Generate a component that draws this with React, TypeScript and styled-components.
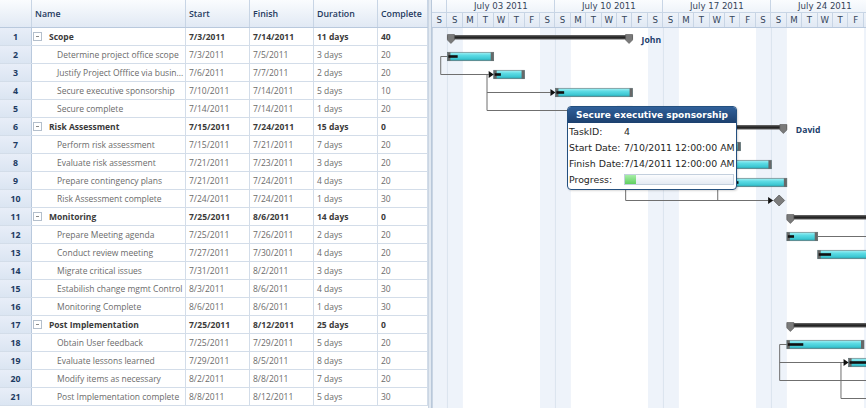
import React from "react";
import styled, { createGlobalStyle } from "styled-components";

// layout constants (px)
const ROW_H = 18;
const HEAD_H = 28;
const DAY_W = 108 / 7;
const GRID_W = 428;
const SPLIT_W = 4;
const DAYS = 29; // Sat Jul 2 .. Sat Jul 30
const HEADER_DAYS = 28; // the last one is off-screen
const COLS = "32px 154px 64px 64px 64px 50px";

type TaskRow = {
  name: string;
  start: string;
  finish: string;
  duration: string;
  complete: string;
  parent?: boolean;
};

const rows: TaskRow[] = [
  { name: "Scope", start: "7/3/2011", finish: "7/14/2011", duration: "11 days", complete: "40", parent: true },
  { name: "Determine project office scope", start: "7/3/2011", finish: "7/5/2011", duration: "3 days", complete: "20" },
  { name: "Justify Project Offfice via busin...", start: "7/6/2011", finish: "7/7/2011", duration: "2 days", complete: "20" },
  { name: "Secure executive sponsorship", start: "7/10/2011", finish: "7/14/2011", duration: "5 days", complete: "10" },
  { name: "Secure complete", start: "7/14/2011", finish: "7/14/2011", duration: "1 days", complete: "20" },
  { name: "Risk Assessment", start: "7/15/2011", finish: "7/24/2011", duration: "15 days", complete: "0", parent: true },
  { name: "Perform risk assessment", start: "7/15/2011", finish: "7/21/2011", duration: "7 days", complete: "20" },
  { name: "Evaluate risk assessment", start: "7/21/2011", finish: "7/23/2011", duration: "3 days", complete: "20" },
  { name: "Prepare contingency plans", start: "7/21/2011", finish: "7/24/2011", duration: "4 days", complete: "20" },
  { name: "Risk Assessment complete", start: "7/24/2011", finish: "7/24/2011", duration: "1 days", complete: "30" },
  { name: "Monitoring", start: "7/25/2011", finish: "8/6/2011", duration: "14 days", complete: "0", parent: true },
  { name: "Prepare Meeting agenda", start: "7/25/2011", finish: "7/26/2011", duration: "2 days", complete: "20" },
  { name: "Conduct review meeting", start: "7/27/2011", finish: "7/30/2011", duration: "4 days", complete: "20" },
  { name: "Migrate critical issues", start: "7/31/2011", finish: "8/2/2011", duration: "3 days", complete: "20" },
  { name: "Estabilish change mgmt Control", start: "8/3/2011", finish: "8/6/2011", duration: "4 days", complete: "30" },
  { name: "Monitoring Complete", start: "8/6/2011", finish: "8/6/2011", duration: "1 days", complete: "30" },
  { name: "Post Implementation", start: "7/25/2011", finish: "8/12/2011", duration: "25 days", complete: "0", parent: true },
  { name: "Obtain User feedback", start: "7/25/2011", finish: "7/29/2011", duration: "5 days", complete: "20" },
  { name: "Evaluate lessons learned", start: "7/29/2011", finish: "8/5/2011", duration: "8 days", complete: "20" },
  { name: "Modify items as necessary", start: "8/2/2011", finish: "8/8/2011", duration: "7 days", complete: "20" },
  { name: "Post Implementation complete", start: "8/8/2011", finish: "8/12/2011", duration: "5 days", complete: "30" },
];

// chart data: s = day index from Sat Jul 2, d = days
const tasks = [
  { r: 1, s: 1, d: 3, p: 20 },
  { r: 2, s: 4, d: 2, p: 20 },
  { r: 3, s: 8, d: 5, p: 10 },
  { r: 4, s: 12, d: 1, p: 20 },
  { r: 6, s: 13, d: 7, p: 20 },
  { r: 7, s: 19, d: 3, p: 20 },
  { r: 8, s: 19, d: 4, p: 20 },
  { r: 11, s: 23, d: 2, p: 20 },
  { r: 12, s: 25, d: 4, p: 20 },
  { r: 17, s: 23, d: 5, p: 20 },
  { r: 18, s: 27, d: 8, p: 20 },
];

const summaries = [
  { r: 0, s: 1, d: 12, label: "John" },
  { r: 5, s: 13, d: 10, label: "David" },
  { r: 10, s: 23, d: 13 },
  { r: 16, s: 23, d: 19 },
];

const weeks = ["July 03 2011", "July 10 2011", "July 17 2011", "July 24 2011"];

const X = (d: number) => d * DAY_W;
const rowTop = (r: number) => r * ROW_H;
const cy = (r: number) => r * ROW_H + 10.5;

const GlobalStyle = createGlobalStyle`
  html, body {
    margin: 0;
    padding: 0;
    background: #ffffff;
    overflow: hidden;
  }
`;

const Frame = styled.div`
  display: flex;
  width: 866px;
  height: 408px;
  overflow: hidden;
  font-family: "Open Sans", "Liberation Sans", sans-serif;
  font-variant-ligatures: none;
`;

const GridPane = styled.div`
  flex: 0 0 ${GRID_W}px;
  display: flex;
  flex-direction: column;
  overflow: hidden;
`;

const GridHeader = styled.div`
  display: grid;
  grid-template-columns: ${COLS};
  flex: 0 0 ${HEAD_H}px;
  box-sizing: border-box;
  background: linear-gradient(#fafcfe, #e1e9f4);
  border-bottom: 1px solid #b9c9dd;
`;

const HeadCell = styled.div`
  display: flex;
  align-items: center;
  padding-left: 3px;
  border-right: 1px solid #c8d5e5;
  font-size: 8.8px;
  font-weight: 600;
  color: #1f3a5f;
  white-space: nowrap;
`;

const GridRow = styled.div<{ $parent?: boolean }>`
  display: grid;
  grid-template-columns: ${COLS};
  flex: 0 0 ${ROW_H}px;
  box-sizing: border-box;
  border-bottom: 1px solid #d3dde9;
  font-size: 8.5px;
  font-weight: ${(p) => (p.$parent ? 700 : 400)};
  color: ${(p) => (p.$parent ? "#3a3a3a" : "#6b6b6b")};
`;

const Cell = styled.div`
  display: flex;
  align-items: center;
  padding-left: 3px;
  border-right: 1px solid #d3dde9;
  white-space: nowrap;
  overflow: hidden;
`;

const NumCell = styled.div`
  display: flex;
  align-items: center;
  justify-content: center;
  background: linear-gradient(#e8eef8, #dbe5f2);
  border-right: 1px solid #b9c9dd;
  font-size: 8.8px;
  font-weight: 700;
  color: #1d3b63;
`;

const NameCell = styled(Cell)<{ $parent?: boolean }>`
  padding-left: ${(p) => (p.$parent ? 1 : 25)}px;
  gap: 7px;
`;

const Collapse = styled.span`
  flex: 0 0 auto;
  display: inline-flex;
  align-items: center;
  justify-content: center;
  width: 7px;
  height: 7px;
  border: 1px solid #b4bfcc;
  background: #fff;
  &::after {
    content: "";
    width: 3px;
    height: 1px;
    background: #8a8a8a;
  }
`;

const Splitter = styled.div`
  flex: 0 0 ${SPLIT_W}px;
  box-sizing: border-box;
  background: #e2e9f1;
  border-left: 1px solid #cbd6e3;
  border-right: 1px solid #b9c8da;
`;

const GanttPane = styled.div`
  position: relative;
  flex: 1 1 auto;
  overflow: hidden;
  display: flex;
  flex-direction: column;
`;

const GanttHeader = styled.div`
  flex: 0 0 ${HEAD_H}px;
  box-sizing: border-box;
  display: flex;
  flex-direction: column;
  background: linear-gradient(#fafcfe, #e1e9f4);
  border-bottom: 1px solid #b9c9dd;
  font-family: "DejaVu Sans", Verdana, sans-serif;
  font-size: 8.6px;
  color: #34445a;
`;

const WeekRow = styled.div`
  display: flex;
  flex: 0 0 13px;
  box-sizing: border-box;
  border-bottom: 1px solid #c8d5e5;
`;

const WeekCell = styled.div<{ $w: number }>`
  flex: 0 0 ${(p) => p.$w}px;
  box-sizing: border-box;
  display: flex;
  align-items: center;
  justify-content: center;
  border-right: 1px solid #c8d5e5;
  white-space: nowrap;
`;

const DayRow = styled.div`
  display: flex;
  flex: 1 1 auto;
`;

const DayCell = styled.div`
  flex: 0 0 ${DAY_W}px;
  box-sizing: border-box;
  display: flex;
  align-items: center;
  justify-content: center;
  border-right: 1px solid #c8d5e5;
`;

const Chart = styled.svg`
  display: block;
  flex: 0 0 auto;
`;

const ResourceLabel = styled.text`
  font-family: "Open Sans", "Liberation Sans", sans-serif;
  font-size: 8.6px;
  font-weight: 700;
  fill: #22406c;
`;

const Tooltip = styled.div`
  position: absolute;
  left: 135px;
  top: 106px;
  width: 170px;
  box-sizing: border-box;
  border: 1px solid #24507f;
  border-radius: 4px;
  background: #fff;
  overflow: hidden;
  font-family: "DejaVu Sans", Verdana, sans-serif;
  font-size: 9.4px;
  color: #1e1e1e;
  box-shadow: 1px 1px 2px rgba(0, 0, 0, 0.15);
`;

const TipTitle = styled.div`
  height: 16px;
  display: flex;
  align-items: center;
  justify-content: center;
  background: linear-gradient(#30609a, #1c406e);
  color: #ffffff;
  font-weight: 700;
  font-size: 9px;
  white-space: nowrap;
`;

const TipBody = styled.div`
  padding: 0 0 2px 1px;
`;

const TipRow = styled.div`
  display: grid;
  grid-template-columns: 55px 1fr;
  align-items: center;
  height: 16px;
  white-space: nowrap;
`;

const ProgressTrack = styled.div`
  display: flex;
  height: 9px;
  margin-right: 2px;
  border: 1px solid #c3cfdd;
  background: linear-gradient(#fbfcfe, #e4eaf3);
`;

const ProgressFill = styled.div`
  background: linear-gradient(#a8eea8, #5fcf5f);
`;

const TaskBar = ({ r, s, d, p }: { r: number; s: number; d: number; p: number }) => {
  const x = X(s);
  const w = X(d);
  const y = rowTop(r) + 6.25;
  const h = 8.5;
  return (
    <g>
      <rect x={x} y={y} width={w} height={h} fill="url(#cyan)" stroke="#5d6d72" strokeWidth={0.6} />
      <rect x={x} y={y} width={3} height={h} fill="#686868" />
      <rect x={x + w - 3} y={y} width={3} height={h} fill="#686868" />
      <rect x={x + 1} y={y + h / 2 - 1.3} width={Math.max(w * (p / 100), 3)} height={2.6} fill="#111" />
    </g>
  );
};

const SummaryBar = ({ r, s, d, label }: { r: number; s: number; d: number; label?: string }) => {
  const x0 = X(s);
  const x1 = X(s + d);
  const t = rowTop(r) + 7;
  const cap = (a: number) =>
    `${a},${t - 0.5} ${a + 7},${t - 0.5} ${a + 7},${t + 5} ${a + 3.5},${t + 8.5} ${a},${t + 5}`;
  return (
    <g>
      <rect x={x0} y={t} width={x1 - x0} height={4.5} fill="url(#summary)" />
      <polygon points={cap(x0)} fill="#7a7a7a" stroke="#555" strokeWidth={0.6} />
      <polygon points={cap(x1 - 7)} fill="#7a7a7a" stroke="#555" strokeWidth={0.6} />
      {label && (
        <ResourceLabel x={x1 + 9} y={rowTop(r) + 15}>
          {label}
        </ResourceLabel>
      )}
    </g>
  );
};

const Arrow = ({ tip, y }: { tip: number; y: number }) => (
  <polygon points={`${tip - 5},${y - 3.5} ${tip},${y} ${tip - 5},${y + 3.5}`} fill="#111" />
);

const GanttChart = () => {
  const mx = X(22) + DAY_W / 2;
  const my = cy(9);
  const a = X(4) - 6.7;
  const b = X(23) - 7.2;
  const c = X(27) - 7.6;
  const links = [
    `M${X(1)} ${cy(1)} H${X(1) - 6.7} V${cy(2)} H${X(4) - 5}`,
    `M${a} ${cy(2)} V${cy(4)} M${a} ${cy(3)} H${X(8) - 5} M${a} ${cy(4)} H${X(12) - 5}`,
    `M${X(13) - 6.9} ${cy(6)} V${my} H${mx - 11}`,
    `M${X(19) - 7.4} ${cy(7)} V${my}`,
    `M${X(25)} ${cy(11)} H460`,
    `M${X(23)} ${cy(17)} H${b} V${cy(19)} H460 M${b} ${cy(18)} H${X(27) - 5}`,
    `M${X(27)} ${cy(18)} H${c} V${cy(20)} H460`,
  ];
  const height = 408 - HEAD_H;
  return (
    <Chart width={X(DAYS)} height={height}>
      <defs>
        <linearGradient id="cyan" x1="0" y1="0" x2="0" y2="1">
          <stop offset="0" stopColor="#a9f1f5" />
          <stop offset="0.35" stopColor="#5edce5" />
          <stop offset="0.75" stopColor="#3ec8d3" />
          <stop offset="1" stopColor="#2a9ea9" />
        </linearGradient>
        <linearGradient id="summary" x1="0" y1="0" x2="0" y2="1">
          <stop offset="0" stopColor="#6e6e6e" />
          <stop offset="0.5" stopColor="#1d1d1d" />
          <stop offset="1" stopColor="#5c5c5c" />
        </linearGradient>
      </defs>
      {Array.from({ length: DAYS }, (_, i) => {
        const dow = (6 + i) % 7;
        return dow === 0 || dow === 6 ? (
          <rect key={i} x={X(i)} y={0} width={DAY_W} height={height} fill="#eef3fa" />
        ) : null;
      })}
      <line x1={0.5} y1={0} x2={0.5} y2={height} stroke="#c9d5e3" />
      {[1, 8, 15, 22].map((i) => (
        <line key={i} x1={X(i)} y1={0} x2={X(i)} y2={height} stroke="#dbe3ee" />
      ))}
      {summaries.map((sm) => (
        <SummaryBar key={sm.r} {...sm} />
      ))}
      <g fill="none" stroke="#6f6f6f" strokeWidth={1}>
        {links.map((d, i) => (
          <path key={i} d={d} />
        ))}
      </g>
      {tasks.map((t) => (
        <TaskBar key={t.r} {...t} />
      ))}
      <Arrow tip={X(4)} y={cy(2)} />
      <Arrow tip={X(8)} y={cy(3)} />
      <Arrow tip={X(12)} y={cy(4)} />
      <Arrow tip={mx - 6} y={my} />
      <Arrow tip={X(27)} y={cy(18)} />
      <polygon
        points={`${mx},${my - 5.5} ${mx + 5.5},${my} ${mx},${my + 5.5} ${mx - 5.5},${my}`}
        fill="#7c7c7c"
        stroke="#4d4d4d"
        strokeWidth={0.7}
      />
    </Chart>
  );
};

const App = () => {
  const dayLetters = Array.from({ length: HEADER_DAYS }, (_, i) => "SMTWTFS"[(6 + i) % 7]);
  return (
    <>
      <GlobalStyle />
      <Frame>
        <GridPane>
          <GridHeader>
            <HeadCell />
            <HeadCell>Name</HeadCell>
            <HeadCell>Start</HeadCell>
            <HeadCell>Finish</HeadCell>
            <HeadCell>Duration</HeadCell>
            <HeadCell>Complete</HeadCell>
          </GridHeader>
          {rows.map((row, i) => (
            <GridRow key={i} $parent={row.parent}>
              <NumCell>{i + 1}</NumCell>
              <NameCell $parent={row.parent}>
                {row.parent && <Collapse />}
                {row.name}
              </NameCell>
              <Cell>{row.start}</Cell>
              <Cell>{row.finish}</Cell>
              <Cell>{row.duration}</Cell>
              <Cell>{row.complete}</Cell>
            </GridRow>
          ))}
        </GridPane>
        <Splitter />
        <GanttPane>
          <GanttHeader>
            <WeekRow>
              <WeekCell $w={DAY_W} />
              {weeks.map((w) => (
                <WeekCell key={w} $w={108}>
                  {w}
                </WeekCell>
              ))}
            </WeekRow>
            <DayRow>
              {dayLetters.map((l, i) => (
                <DayCell key={i}>{l}</DayCell>
              ))}
            </DayRow>
          </GanttHeader>
          <GanttChart />
          <Tooltip>
            <TipTitle>Secure executive sponsorship</TipTitle>
            <TipBody>
              <TipRow>
                <span>TaskID:</span>
                <span>4</span>
              </TipRow>
              <TipRow>
                <span>Start Date:</span>
                <span>7/10/2011 12:00:00 AM</span>
              </TipRow>
              <TipRow>
                <span>Finish Date:</span>
                <span>7/14/2011 12:00:00 AM</span>
              </TipRow>
              <TipRow>
                <span>Progress:</span>
                <ProgressTrack>
                  <ProgressFill style={{ width: "10%" }} />
                </ProgressTrack>
              </TipRow>
            </TipBody>
          </Tooltip>
        </GanttPane>
      </Frame>
    </>
  );
};

export default App;
